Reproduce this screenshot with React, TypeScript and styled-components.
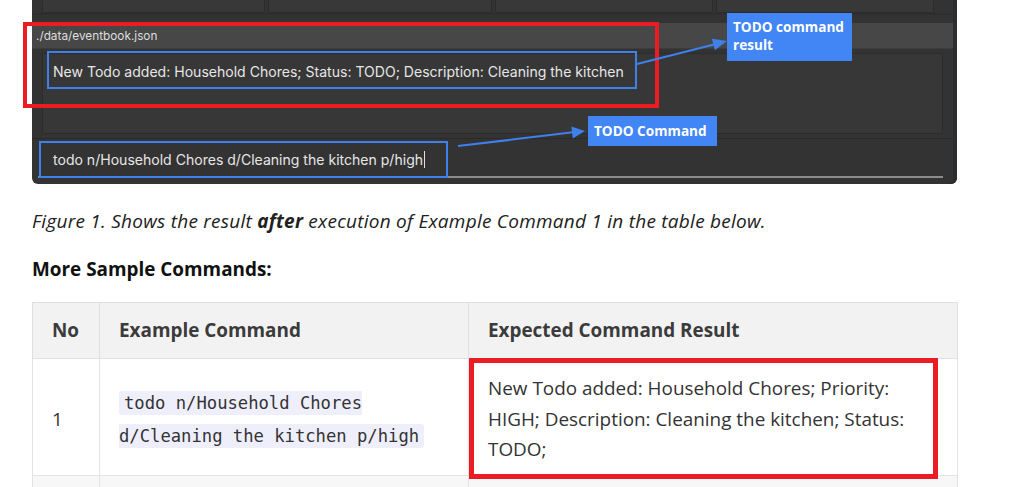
import React from 'react';
import styled, { createGlobalStyle } from 'styled-components';

const GlobalStyle = createGlobalStyle`
  html, body {
    margin: 0;
    padding: 0;
    background: #fff;
  }
  body {
    font-family: 'Open Sans', 'Noto Sans', sans-serif;
    color: #333;
  }
`;

const Page = styled.div`
  position: relative;
  padding: 0 0 0 32px;
  width: 925px;
`;

// ---- screenshot of the desktop app ----

const Figure = styled.div`
  position: relative;
`;

const AppShot = styled.div`
  width: 925px;
  height: 184px;
  background: #333333;
  border-radius: 0 0 6px 6px;
  box-shadow: inset -4px 0 0 #2b2d30;
  display: flex;
  flex-direction: column;
  font-family: Inter, 'Noto Sans', sans-serif;
  color: #e6e6e6;
  overflow: hidden;
`;

const CellRow = styled.div`
  display: grid;
  grid-template-columns: 223px 224px 218px 218px;
  gap: 3px;
  padding: 0 10px;
  height: 13px;
  border-bottom: 2px solid #2e2e2e;
  margin-right: 4px;
`;

const Cell = styled.div`
  background: #383838;
  border: 1px solid #2c2c2c;
  border-top: none;
`;

const StatusBar = styled.div`
  margin-top: 8px;
  height: 24px;
  margin-right: 4px;
  background: #474747;
  border-bottom: 1px solid #3c3c3c;
  display: flex;
  align-items: center;
  padding: 1px 0 0 4px;
  font-size: 11.8px;
  color: #dedede;
`;

const ResultBox = styled.div`
  margin: 4px 14px 0 10px;
  height: 81px;
  box-sizing: border-box;
  background: #373737;
  border: 1px solid #2c2c2c;
  padding: 8px 0 0 10px;
  font-size: 14.05px;
  line-height: 20px;
`;

const InputArea = styled.div`
  margin-top: 4px;
  margin-right: 4px;
  flex: 1;
  border-top: 1px solid #2a2a2a;
  padding: 11px 0 0 21px;
  position: relative;
  font-size: 14.05px;
  line-height: 20px;

  &::after {
    content: '';
    position: absolute;
    left: 6px;
    right: 10px;
    bottom: 6px;
    height: 2px;
    background: #8c8c8c;
  }
`;

const Caret = styled.span`
  display: inline-block;
  width: 1px;
  height: 17px;
  margin-left: 1px;
  vertical-align: -3px;
  background: #e0e0e0;
`;

// ---- annotations drawn over the screenshot ----

const RedFrame = styled.div`
  position: absolute;
  left: -9px;
  top: 22px;
  width: 636px;
  height: 86px;
  box-sizing: border-box;
  border: 4px solid #ec1c24;
  pointer-events: none;
`;

const BlueFrame = styled.div<{ $x: number; $y: number; $w: number; $h: number }>`
  position: absolute;
  left: ${p => p.$x}px;
  top: ${p => p.$y}px;
  width: ${p => p.$w}px;
  height: ${p => p.$h}px;
  box-sizing: border-box;
  border: 2px solid #3f80ea;
  pointer-events: none;
`;

const Callout = styled.div<{ $x: number; $y: number; $w: number; $h: number; $pt?: number }>`
  position: absolute;
  left: ${p => p.$x}px;
  top: ${p => p.$y}px;
  width: ${p => p.$w}px;
  height: ${p => p.$h}px;
  box-sizing: border-box;
  padding: ${p => p.$pt ?? 5}px 6px 5px;
  background: #4285f4;
  color: #fff;
  font-family: 'Open Sans', sans-serif;
  font-weight: 700;
  font-size: 13.6px;
  line-height: 18px;
`;

const ArrowLayer = styled.svg`
  position: absolute;
  left: -32px;
  top: 0;
  pointer-events: none;
`;

// ---- document text ----

const Caption = styled.p`
  margin: 23px 0 0;
  font-size: 19px;
  letter-spacing: 0.25px;
  line-height: 28px;
  font-style: italic;
  color: #212121;

  strong {
    font-weight: 700;
  }
`;

const Heading = styled.h4`
  margin: 20px 0 0;
  font-size: 18.9px;
  line-height: 28px;
  font-weight: 700;
  color: #111;
`;

const Table = styled.table`
  margin-top: 19px;
  width: 925px;
  border-collapse: collapse;
  table-layout: fixed;
  font-size: 18.9px;
`;

const HeadCell = styled.th<{ $w: number }>`
  width: ${p => p.$w}px;
  box-sizing: border-box;
  text-align: left;
  padding: 12px 19px 13px;
  line-height: 30px;
  background: #f2f2f2;
  border: 1px solid #e0e0e0;
  color: #3b3b3b;
  font-weight: 700;
`;

const Row = styled.tr<{ $striped?: boolean }>`
  background: ${p => (p.$striped ? '#f7f7f7' : '#fff')};
`;

const BodyCell = styled.td<{ $lh?: number }>`
  padding: 14px 19px 10px;
  border: 1px solid #e3e3e3;
  line-height: ${p => p.$lh ?? 30.5}px;
  vertical-align: middle;
  color: #333;
`;

const ResultCell = styled(BodyCell)`
  position: relative;

  &::after {
    content: '';
    position: absolute;
    left: 0;
    top: -1px;
    right: 19px;
    bottom: -4px;
    border: 5px solid #ec1c24;
    pointer-events: none;
  }
`;

const Code = styled.code`
  font-family: 'DejaVu Sans Mono', 'Liberation Mono', monospace;
  font-size: 17.2px;
  padding: 2px 5px;
  background: #efeffc;
  border-radius: 3px;
  color: #333;
  -webkit-box-decoration-break: slice;
  box-decoration-break: slice;
`;

const EmptyCell = styled.td`
  height: 11px;
  padding: 0;
  border: 1px solid #e3e3e3;
  border-bottom: none;
`;

export default function App() {
  return (
    <>
      <GlobalStyle />
      <Page>
        <Figure>
          <AppShot>
            <CellRow>
              <Cell />
              <Cell />
              <Cell />
              <Cell />
            </CellRow>
            <StatusBar>./data/eventbook.json</StatusBar>
            <ResultBox>
              New Todo added: Household Chores; Status: TODO; Description: Cleaning the kitchen
            </ResultBox>
            <InputArea>
              todo n/Household Chores d/Cleaning the kitchen p/high
              <Caret />
            </InputArea>
          </AppShot>

          <RedFrame />
          <BlueFrame $x={15} $y={51} $w={590} $h={38} />
          <BlueFrame $x={7} $y={141} $w={409} $h={37} />

          <ArrowLayer width="1031" height="190" viewBox="0 0 1031 190">
            <line x1="637" y1="64" x2="716" y2="44" stroke="#3f80ea" strokeWidth="2.2" />
            <polygon points="727,41 714.9,50.3 711.9,38.7" fill="#3f80ea" />
            <line x1="458" y1="146" x2="575" y2="132" stroke="#3f80ea" strokeWidth="2.2" />
            <polygon points="585,131 572.8,138.6 571.4,126.6" fill="#3f80ea" />
          </ArrowLayer>

          <Callout $x={695} $y={13} $w={125} $h={48}>
            TODO command
            <br />
            result
          </Callout>
          <Callout $x={556} $y={116} $w={129} $h={30} $pt={6}>
            TODO Command
          </Callout>
        </Figure>

        <Caption>
          Figure 1. Shows the result <strong>after</strong> execution of Example Command 1 in the table below.
        </Caption>
        <Heading>More Sample Commands:</Heading>

        <Table>
          <thead>
            <tr>
              <HeadCell $w={67}>No</HeadCell>
              <HeadCell $w={369}>Example Command</HeadCell>
              <HeadCell $w={489}>Expected Command Result</HeadCell>
            </tr>
          </thead>
          <tbody>
            <Row>
              <BodyCell>1</BodyCell>
              <BodyCell $lh={32}>
                <Code>todo n/Household Chores d/Cleaning the kitchen p/high</Code>
              </BodyCell>
              <ResultCell>
                New Todo added: Household Chores; Priority: HIGH; Description: Cleaning the kitchen; Status: TODO;
              </ResultCell>
            </Row>
            <Row $striped>
              <EmptyCell />
              <EmptyCell />
              <EmptyCell />
            </Row>
          </tbody>
        </Table>
      </Page>
    </>
  );
}
